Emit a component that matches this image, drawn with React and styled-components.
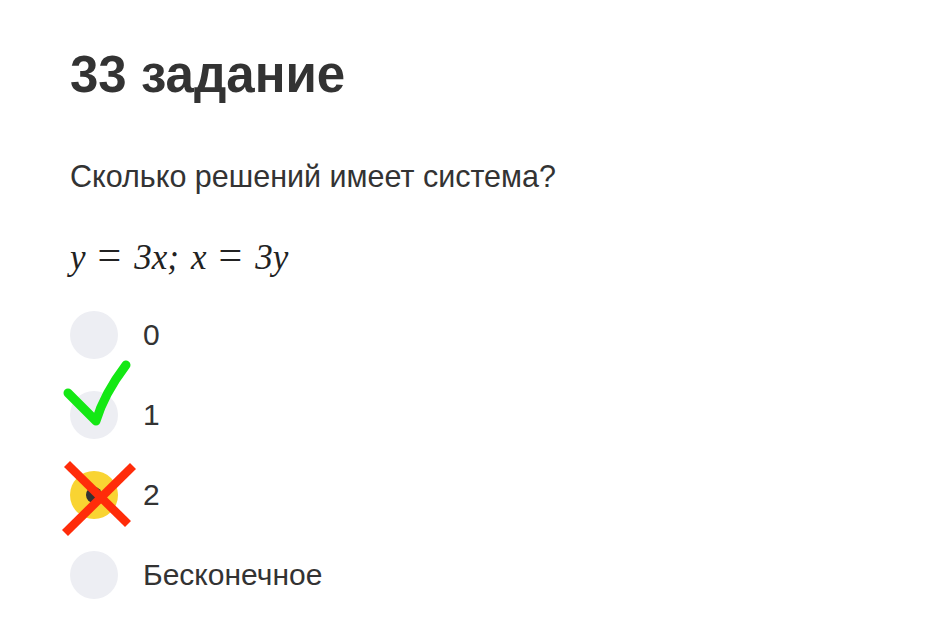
import React from 'react';
import styled, { createGlobalStyle } from 'styled-components';

const Global = createGlobalStyle`
    body {
        margin: 0;
        background: #fff;
        font-family: "Liberation Sans", Arial, sans-serif;
        color: #333;
    }
`;

const Page = styled.main`
    padding: 40px 70px 0;
`;

const Title = styled.h1`
    margin: 0;
    font-size: 51px;
    line-height: 70px;
    font-weight: 700;
    color: #333;
`;

const Question = styled.p`
    margin: 48px 0 0;
    font-size: 30.5px;
    line-height: 36px;
`;

const Formula = styled.div`
    margin-top: 41px;
    font-family: "Liberation Serif", "Times New Roman", serif;
    font-style: italic;
    font-size: 35px;
    line-height: 40px;
    color: #222;
    .op {
        font-style: normal;
        font-size: 42px;
        margin: 0 13px 0 12px;
    }
    .sep {
        margin-right: 12px;
    }
`;

const Options = styled.ul`
    list-style: none;
    margin: 33px 0 0;
    padding: 0;
    display: flex;
    flex-direction: column;
    gap: 32px;
`;

const Option = styled.li`
    display: flex;
    align-items: center;
    gap: 25px;
    font-size: 30px;
`;

const Radio = styled.span`
    position: relative;
    width: 48px;
    height: 48px;
    border-radius: 50%;
    flex-shrink: 0;
    background: ${p => (p.$checked ? '#f9d432' : '#edeef3')};
    display: flex;
    align-items: center;
    justify-content: center;
    &::before {
        content: '';
        display: ${p => (p.$checked ? 'block' : 'none')};
        width: 16px;
        height: 16px;
        border-radius: 50%;
        background: #333;
    }
`;

const Mark = styled.svg`
    position: absolute;
    left: -10px;
    top: ${p => p.$top}px;
    overflow: visible;
`;

const Check = () => (
    <Mark $top={-35} width="75" height="80" viewBox="0 0 75 80">
        <path d="M8 37 L36 65 Q44 38 66 9" fill="none" stroke="#14e814" strokeWidth="9" strokeLinecap="round" strokeLinejoin="round" />
    </Mark>
);

const Cross = () => (
    <Mark $top={-12} width="78" height="80" viewBox="0 0 78 80">
        <g stroke="#ff2c0a" strokeWidth="8.5">
            <line x1="7" y1="5" x2="68" y2="65" />
            <line x1="73" y1="7" x2="5" y2="74" />
        </g>
    </Mark>
);

const options = [
    { label: '0' },
    { label: '1', mark: 'right' },
    { label: '2', checked: true, mark: 'wrong' },
    { label: 'Бесконечное' },
];

export default function App() {
    return (
        <Page>
            <Global />
            <Title>33 задание</Title>
            <Question>Сколько решений имеет система?</Question>
            <Formula>
                y<span className="op">=</span>3x<span className="sep">;</span>x<span className="op">=</span>3y
            </Formula>
            <Options>
                {options.map(o => (
                    <Option key={o.label}>
                        <Radio $checked={o.checked}>
                            {o.mark === 'right' && <Check />}
                            {o.mark === 'wrong' && <Cross />}
                        </Radio>
                        {o.label}
                    </Option>
                ))}
            </Options>
        </Page>
    );
}
